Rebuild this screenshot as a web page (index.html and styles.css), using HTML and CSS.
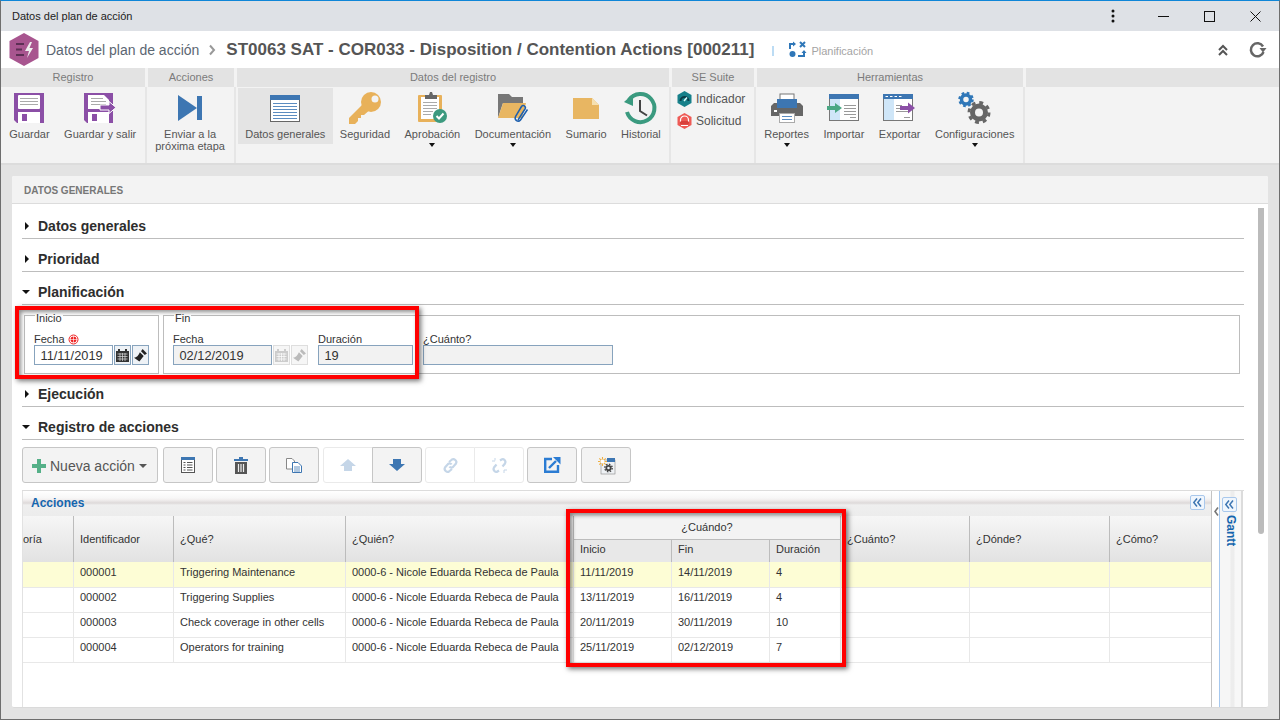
FILE: index.html
```html
<!doctype html>
<html lang="en">
  <head>
    <meta charset="UTF-8" />
    <title>Datos del plan de acción</title>
    <link rel="stylesheet" href="styles.css">
  </head>

  <body>
    <div class="window">
      <!-- Title bar -->
      <div class="titlebar">
        <span class="titlebar-text">Datos del plan de acción</span>
        <div class="win-controls">
          <svg class="win-kebab" width="4" height="14" viewBox="0 0 4 14"><circle cx="2" cy="2" r="1.5" fill="#111"/><circle cx="2" cy="7" r="1.5" fill="#111"/><circle cx="2" cy="12" r="1.5" fill="#111"/></svg>
          <svg class="win-min" width="11" height="11" viewBox="0 0 11 11"><path d="M0 5.5H11" stroke="#111"/></svg>
          <svg class="win-max" width="11" height="11" viewBox="0 0 11 11"><rect x=".5" y=".5" width="10" height="10" fill="none" stroke="#111"/></svg>
          <svg class="win-close" width="11" height="11" viewBox="0 0 11 11"><path d="M.5 .5L10.5 10.5M10.5 .5L.5 10.5" stroke="#111"/></svg>
        </div>
      </div>

      <!-- Header -->
      <div class="header">
        <svg class="logo" width="30" height="33" viewBox="0 0 30 33">
          <path d="M15 0L29.5 8V25L15 33L.5 25V8Z" fill="#a8558f"/>
          <path d="M7 11H15M7 16.5H13M7 22H15" stroke="#5c2f54" stroke-width="2"/>
          <path d="M21 9L16 18H20L18 25L24 15H20.500L23 9Z" fill="#eee"/>
        </svg>
        <span class="crumb">Datos del plan de acción</span>
        <svg class="crumb-sep" width="6" height="10" viewBox="0 0 6 10"><path d="M1 .5L5 5L1 9.500" fill="none" stroke="#999" stroke-width="2"/></svg>
        <span class="record-title">ST0063 SAT - COR033 - Disposition / Contention Actions [000211]</span>
        <span class="head-bar"></span>
        <svg class="plan-icon" width="17" height="17" viewBox="0 0 17 17" fill="none" stroke="#2f77b8" stroke-width="2">
          <path d="M1 8V3H6"/><path d="M4 0.500L7 3L4 5.500" fill="#2f77b8" stroke="none"/>
          <path d="M11 1L16 6M16 1L11 6"/>
          <circle cx="3.500" cy="13" r="3" fill="#2f77b8" stroke="none"/>
          <path d="M9 15H15V10"/><path d="M12.500 12L15 9L17.500 12" fill="#2f77b8" stroke="none"/>
        </svg>
        <span class="plan-text">Planificación</span>
        <div class="head-right">
          <svg width="10" height="12" viewBox="0 0 10 12" fill="none" stroke="#555" stroke-width="2"><path d="M1 6L5 2L9 6M1 11L5 7L9 11"/></svg>
          <svg class="refresh" width="18" height="16" viewBox="0 0 18 16" fill="none"><path d="M14 4.500A6.500 6.500 0 1 0 14.500 10" stroke="#666" stroke-width="2.500"/><path d="M10.500 6H17.500L14 10.500Z" fill="#666"/></svg>
        </div>
      </div>

      <!-- Ribbon -->
      <div class="ribbon">
        <div class="rb-group rb-registro">
          <div class="rb-title">Registro</div>
          <div class="rb-body">
            <div class="rb-item">
              <svg width="30" height="36" viewBox="14 90 30 36">
                <path d="M14 93H44V123H17L14 120Z" fill="#8b4fa6"/>
                <rect x="18" y="95" width="22" height="14" rx="1" fill="#fff"/>
                <path d="M20 98.500H38M20 101.500H38M20 104.500H38" stroke="#aaa"/>
                <rect x="18" y="112" width="22" height="11" fill="#fff"/>
                <rect x="22" y="114" width="5" height="7" fill="#8b4fa6"/>
              </svg>
              <div class="rb-label">Guardar</div>
            </div>
            <div class="rb-item">
              <svg width="33" height="36" viewBox="84 90 33 36">
                <path d="M84 93H113V123H87L84 120Z" fill="#8b4fa6"/>
                <path d="M88 95H104L109 100V109H88Z" fill="#fff"/>
                <path d="M91 98.500H103M91 101.500H106M91 104.500H106" stroke="#aaa"/>
                <rect x="88" y="112" width="21" height="11" fill="#fff"/>
                <rect x="92" y="114" width="5" height="7" fill="#8b4fa6"/>
                <path d="M100 105H109V101.500L116 107.500L109 113.500V110H100Z" fill="#8b4fa6" stroke="#fff"/>
              </svg>
              <div class="rb-label">Guardar y salir</div>
            </div>
          </div>
        </div>

        <div class="rb-group rb-acciones">
          <div class="rb-title">Acciones</div>
          <div class="rb-body">
            <div class="rb-item">
              <svg width="24" height="36" viewBox="179 90 24 36">
                <path d="M179 95L198 108L179 121Z" fill="#3d76b2"/>
                <rect x="198" y="96" width="5" height="24" fill="#3d76b2"/>
              </svg>
              <div class="rb-label">Enviar a la<br>próxima etapa</div>
            </div>
          </div>
        </div>

        <div class="rb-group rb-datos">
          <div class="rb-title">Datos del registro</div>
          <div class="rb-body">
            <div class="rb-item rb-active">
              <svg width="30" height="36" viewBox="270 90 30 36">
                <rect x="270.500" y="95.500" width="29" height="26" fill="#fff" stroke="#666"/>
                <rect x="270" y="95" width="30" height="5" fill="#3d76b2"/>
                <path d="M273 103.500H297M273 106.500H297M273 109.500H297M273 112.500H297M273 115.500H297M273 118.500H297" stroke="#5b8cc0"/>
              </svg>
              <div class="rb-label">Datos generales</div>
            </div>
            <div class="rb-item">
              <svg width="32" height="36" viewBox="349 90 32 36">
                <circle cx="371" cy="102" r="10" fill="#e8b15a"/>
                <path d="M365 102L349 118V124H355L358 121V118H361V115H364L372 108Z" fill="#e8b15a"/>
                <circle cx="375" cy="99" r="3.500" fill="#f3f3f3"/>
              </svg>
              <div class="rb-label">Seguridad</div>
            </div>
            <div class="rb-item">
              <svg width="30" height="36" viewBox="418 90 30 36">
                <rect x="419" y="95" width="24" height="27" rx="1" fill="#e8b15a"/>
                <rect x="422" y="97" width="18" height="22" fill="#fff"/>
                <path d="M424 102.500H438M424 105.500H438M424 108.500H438M424 111.500H434M424 114.500H432" stroke="#aaa"/>
                <path d="M431 92H433L434 95H438V99H426V95H430Z" fill="#666"/>
                <circle cx="441" cy="116" r="7" fill="#3c9a7f"/>
                <path d="M437.500 116L440 118.500L444.500 113.500" fill="none" stroke="#fff" stroke-width="2"/>
              </svg>
              <div class="rb-label">Aprobación</div>
              <div class="rb-caret"></div>
            </div>
            <div class="rb-item">
              <svg width="32" height="36" viewBox="497 90 32 36">
                <path d="M498 94H509L512 97H523V103H503L498 118Z" fill="#777"/>
                <path d="M503 103H526L522 118H498Z" fill="#e8b662"/>
                <path d="M518 120L525 109C526.500 106.500 523 104 521.500 106.500L515.500 116.500C514 120 518 123 520.500 120L527.500 109.500" fill="none" stroke="#1d5fae" stroke-width="1.500"/>
              </svg>
              <div class="rb-label">Documentación</div>
              <div class="rb-caret"></div>
            </div>
            <div class="rb-item">
              <svg width="26" height="36" viewBox="574 90 26 36">
                <path d="M574 98H593L600 105V119H574Z" fill="#e8b662"/>
                <path d="M593 98L600 105H593Z" fill="#f6e0b0"/>
              </svg>
              <div class="rb-label">Sumario</div>
            </div>
            <div class="rb-item">
              <svg width="33" height="36" viewBox="625 90 33 36">
                <path d="M630 100A14 14 0 1 1 628 112" fill="none" stroke="#3a9a7f" stroke-width="4"/>
                <path d="M625 102L634 94V106Z" fill="#3a9a7f"/>
                <path d="M641 100V111L648 115.500" fill="none" stroke="#444" stroke-width="2"/>
              </svg>
              <div class="rb-label">Historial</div>
            </div>
          </div>
        </div>

        <div class="rb-group rb-suite">
          <div class="rb-title">SE Suite</div>
          <div class="rb-body rb-links">
            <div class="rb-link">
              <svg width="15" height="16" viewBox="0 0 15 16">
                <path d="M7.500 0L14.500 4V12L7.500 16L.5 12V4Z" fill="#17808a"/>
                <path d="M3.500 10A4 4 0 0 1 11.500 10" fill="none" stroke="#0d3d48" stroke-width="2"/>
                <path d="M7 10L10 6.500" stroke="#dff" stroke-width="1.500"/>
              </svg>
              <span>Indicador</span>
            </div>
            <div class="rb-link">
              <svg width="15" height="16" viewBox="0 0 15 16">
                <path d="M7.500 0L14.500 4V12L7.500 16L.5 12V4Z" fill="#ee5a55"/>
                <path d="M3.500 9V7A4 4 0 0 1 11.500 7V9" fill="none" stroke="#fff" stroke-width="1.200"/>
                <rect x="3" y="8" width="9" height="3.500" rx="1.500" fill="#d8403c"/>
                <path d="M4 12.500H11" stroke="#fff"/>
              </svg>
              <span>Solicitud</span>
            </div>
          </div>
        </div>

        <div class="rb-group rb-tools">
          <div class="rb-title">Herramientas</div>
          <div class="rb-body">
            <div class="rb-item">
              <svg width="32" height="36" viewBox="772 90 32 36">
                <rect x="781" y="94" width="14" height="6" fill="#fff" stroke="#777"/>
                <path d="M772 106L775 103H801L804 106V116H772Z" fill="#666"/>
                <rect x="778" y="99" width="20" height="9" fill="#3d76b2"/>
                <rect x="780.500" y="113.500" width="15" height="9" fill="#fff" stroke="#aaa"/>
                <path d="M783 116.500H793M783 119.500H793" stroke="#5b8cc0"/>
                <rect x="775" y="110" width="3" height="2" fill="#fff"/>
              </svg>
              <div class="rb-label">Reportes</div>
              <div class="rb-caret"></div>
            </div>
            <div class="rb-item">
              <svg width="33" height="36" viewBox="829 90 33 36">
                <rect x="831.500" y="94.500" width="29" height="26" fill="#fff" stroke="#777"/>
                <rect x="831" y="94" width="30" height="5" fill="#3d76b2"/>
                <rect x="832" y="99" width="10" height="21" fill="#cfe6f8"/>
                <path d="M846 105.500H858M846 108.500H858M846 111.500H858M846 114.500H858M852 117.500H858" stroke="#999"/>
                <path d="M829 106H837V103L844 108L837 113V110H829Z" fill="#4aa884"/>
              </svg>
              <div class="rb-label">Importar</div>
            </div>
            <div class="rb-item">
              <svg width="33" height="36" viewBox="884 90 33 36">
                <rect x="884.500" y="94.500" width="29" height="26" fill="#fff" stroke="#777"/>
                <rect x="884" y="94" width="30" height="5" fill="#3d76b2"/>
                <path d="M886.500 96.500H889M891 96.500H893.500M895.500 96.500H898M900 96.500H902.500" stroke="#fff"/>
                <rect x="885" y="99" width="10" height="21" fill="#cfe6f8"/>
                <path d="M897 105.500H903M897 108.500H903M897 111.500H911M905 117.500H911" stroke="#999"/>
                <path d="M901 106H909V102.500L916 108L909 113.500V110H901Z" fill="#8b4fa6"/>
              </svg>
              <div class="rb-label">Exportar</div>
            </div>
            <div class="rb-item">
              <svg width="33" height="36" viewBox="958.500 90 33 36" fill="none">
                <circle cx="966.500" cy="99.500" r="4.500" stroke="#2f77b8" stroke-width="3.500"/>
                <circle cx="966.500" cy="99.500" r="6.500" stroke="#2f77b8" stroke-width="2.500" stroke-dasharray="2.600 2.500"/>
                <circle cx="979.500" cy="112.500" r="6.500" stroke="#666" stroke-width="5"/>
                <circle cx="979.500" cy="112.500" r="10" stroke="#666" stroke-width="3" stroke-dasharray="3.900 3.950"/>
              </svg>
              <div class="rb-label">Configuraciones</div>
              <div class="rb-caret"></div>
            </div>
          </div>
        </div>

        <div class="rb-group rb-rest">
          <div class="rb-title">&nbsp;</div>
          <div class="rb-body"></div>
        </div>
      </div>

      <!-- Main panel -->
      <div class="content">
        <div class="panel">
          <div class="panel-head">Datos generales</div>
          <div class="panel-body">
            <div class="scrollbar"></div>

            <div class="section-head"><span class="arrow-right"></span>Datos generales</div>
            <div class="section-head"><span class="arrow-right"></span>Prioridad</div>
            <div class="section-head"><span class="arrow-down"></span>Planificación</div>

            <div class="plan-fields">
              <fieldset class="fset fset-start">
                <legend>Inicio</legend>
                <div class="field">
                  <label>Fecha
                    <svg width="11" height="11" viewBox="0 0 11 11"><circle cx="5.500" cy="5.500" r="4.500" fill="none" stroke="#e22"/><circle cx="5.500" cy="5.500" r="3" fill="#e22"/><path d="M5.500 2V9M2 5.500H9" stroke="#fff" stroke-width=".6"/></svg>
                  </label>
                  <div class="date-row">
                    <div class="input input-start">11/11/2019</div>
                    <div class="pick-btn">
                      <svg width="13" height="13" viewBox="0 0 13 13"><path d="M0 2H13V13H0Z" fill="#333"/><path d="M3 0V3M10 0V3" stroke="#333" stroke-width="2"/><path d="M1.500 5H11.500M1.500 7.500H11.500M1.500 10H11.500M4 4V12M6.500 4V12M9 4V12" stroke="#ddd" stroke-width=".7"/></svg>
                    </div>
                    <div class="pick-btn">
                      <svg width="14" height="14" viewBox="0 0 13 13"><path d="M8 1L12 5L10 6.500L6.500 3Z" fill="#222"/><path d="M5.500 4L9 7.500L5 12.500L0 9C2.500 9 4 7 5.500 4Z" fill="#222"/></svg>
                    </div>
                  </div>
                </div>
              </fieldset>

              <fieldset class="fset fset-end">
                <legend>Fin</legend>
                <div class="field">
                  <label>Fecha</label>
                  <div class="date-row">
                    <div class="input input-end input-off">02/12/2019</div>
                    <div class="pick-btn pick-off">
                      <svg width="13" height="13" viewBox="0 0 13 13"><path d="M0 2H13V13H0Z" fill="#ccc"/><path d="M3 0V3M10 0V3" stroke="#ccc" stroke-width="2"/><path d="M1.500 5H11.500M1.500 7.500H11.500M1.500 10H11.500M4 4V12M6.500 4V12M9 4V12" stroke="#fff" stroke-width=".7"/></svg>
                    </div>
                    <div class="pick-btn pick-off">
                      <svg width="14" height="14" viewBox="0 0 13 13"><path d="M8 1L12 5L10 6.500L6.500 3Z" fill="#bbb"/><path d="M5.500 4L9 7.500L5 12.500L0 9C2.500 9 4 7 5.500 4Z" fill="#bbb"/></svg>
                    </div>
                  </div>
                </div>
                <div class="field">
                  <label>Duración</label>
                  <div class="input input-dur input-off">19</div>
                </div>
                <div class="field">
                  <label>¿Cuánto?</label>
                  <div class="input input-cost input-off"></div>
                </div>
              </fieldset>
            </div>

            <div class="section-head"><span class="arrow-right"></span>Ejecución</div>
            <div class="section-head"><span class="arrow-down"></span>Registro de acciones</div>

            <div class="toolbar">
              <button class="tb-btn tb-new">
                <svg width="14" height="14" viewBox="0 0 14 14"><path d="M5 0H9V5H14V9H9V14H5V9H0V5H5Z" fill="#55b088"/></svg>
                Nueva acción
                <span class="tb-caret"></span>
              </button>
              <button class="tb-btn">
                <svg width="14" height="16" viewBox="0 0 14 16"><rect x=".5" y=".5" width="13" height="15" fill="#fff" stroke="#555"/><rect width="14" height="3" fill="#3d76b2"/><path d="M2.500 5.500H4.500M6 5.500H11.500M2.500 8H4.500M6 8H11.500M2.500 10.500H4.500M6 10.500H11.500M2.500 13H4.500M6 13H11.500" stroke="#555"/></svg>
              </button>
              <button class="tb-btn">
                <svg width="14" height="17" viewBox="0 0 14 17"><path d="M0 2H14V4H0ZM5 0H9V2H5Z" fill="#3d76b2"/><path d="M1 5H13V17H1Z" fill="#555"/><path d="M4.500 7V15M7 7V15M9.500 7V15" stroke="#eee" stroke-width="1.200"/></svg>
              </button>
              <button class="tb-btn">
                <svg width="16" height="15" viewBox="0 0 16 15"><path d="M.5 .5H6L8.500 3V11H.5Z" fill="#fff" stroke="#888"/><path d="M6.500 4.500H12L15.500 8V14.500H6.500Z" fill="#fff" stroke="#3d76b2"/><path d="M8 9H14M8 11H14M8 13H14" stroke="#3d76b2" stroke-width=".8"/></svg>
              </button>
              <div class="tb-join tb-join-move">
                <button class="tb-btn tb-off">
                  <svg width="16" height="12" viewBox="0 0 16 12"><path d="M8 0L16 7H12V12H4V7H0Z" fill="#c5d6e8"/></svg>
                </button>
                <button class="tb-btn">
                  <svg width="16" height="12" viewBox="0 0 16 12"><path d="M4 0H12V5H16L8 12L0 5H4Z" fill="#3d76b2"/></svg>
                </button>
              </div>
              <div class="tb-join">
                <button class="tb-btn tb-off">
                  <svg width="17" height="17" viewBox="0 0 17 17" fill="none" stroke="#c5d6e8" stroke-width="2.200"><path d="M7 5L10 2.500C12 1 15.500 4 14 6.500L11 10C9.500 11 8 10.500 7.500 9.500"/><path d="M10 12L7 14.500C5 16 1.500 13 3 10.500L6 7C7.500 6 9 6.500 9.500 7.500"/></svg>
                </button>
                <button class="tb-btn tb-off">
                  <svg width="17" height="17" viewBox="0 0 17 17" fill="none" stroke="#c5d6e8" stroke-width="2.200"><path d="M9 3.500L10.500 2.500C12.500 1 15.500 4 14 6.500L11.500 9.500"/><path d="M8 13.500L6.500 14.500C4.500 16 1.500 13 3 10.500L5.500 7.500"/><path d="M1 4H4M4 1V3.500M13 16V13M16 13H13" stroke-width="1"/></svg>
                </button>
              </div>
              <button class="tb-btn">
                <svg width="17" height="16" viewBox="0 0 17 16" fill="none"><path d="M8 2H1.200V14.800H14V8" stroke="#2b7cd3" stroke-width="2.400"/><path d="M5 11L12 4" stroke="#2b7cd3" stroke-width="2.400"/><path d="M9 0H16.500V7.500Z" fill="#2b7cd3"/></svg>
              </button>
              <button class="tb-btn tb-last">
                <svg width="17" height="17" viewBox="0 0 17 17"><rect x="3" y="3" width="14" height="14" fill="#eef1f4" stroke="#888" stroke-width=".6"/><rect x="9" y="1" width="8" height="4" fill="#3d76b2"/><path d="M4.500 0V9M0 4.500H9M1.300 1.300L7.700 7.700M7.700 1.300L1.300 7.700" stroke="#f0b040" stroke-width="1.100"/><circle cx="4.500" cy="4.500" r="2" fill="#fff"/><circle cx="10.500" cy="11" r="2.200" fill="none" stroke="#444" stroke-width="1.800"/><circle cx="10.500" cy="11" r="3.700" fill="none" stroke="#444" stroke-width="1.400" stroke-dasharray="1.500 1.400"/></svg>
              </button>
            </div>

            <div class="grid-wrap">
              <div class="grid-main">
                <div class="grid-strip">
                  <span class="grid-title">Acciones</span>
                  <div class="collapse-btn">
                    <svg width="9" height="9" viewBox="0 0 9 9" fill="none" stroke="#3d76b2" stroke-width="1.500"><path d="M4 .5L.8 4.500L4 8.500M8 .5L4.800 4.500L8 8.500"/></svg>
                  </div>
                </div>
                <table class="grid">
                  <colgroup>
                    <col class="c-cat"><col class="c-id"><col class="c-what"><col class="c-who">
                    <col class="c-date"><col class="c-date"><col class="c-dur">
                    <col class="c-cost"><col class="c-where"><col class="c-how">
                  </colgroup>
                  <thead>
                    <tr class="head-top">
                      <th rowspan="2" class="th-cat">oría</th>
                      <th rowspan="2">Identificador</th>
                      <th rowspan="2">¿Qué?</th>
                      <th rowspan="2">¿Quién?</th>
                      <th colspan="3" class="th-when">¿Cuándo?</th>
                      <th rowspan="2">¿Cuánto?</th>
                      <th rowspan="2">¿Dónde?</th>
                      <th rowspan="2">¿Cómo?</th>
                    </tr>
                    <tr class="head-sub">
                      <th>Inicio</th>
                      <th>Fin</th>
                      <th>Duración</th>
                    </tr>
                  </thead>
                  <tbody>
                    <tr class="row-selected">
                      <td></td><td>000001</td><td>Triggering Maintenance</td><td>0000-6 - Nicole Eduarda Rebeca de Paula</td>
                      <td>11/11/2019</td><td>14/11/2019</td><td>4</td><td></td><td></td><td></td>
                    </tr>
                    <tr>
                      <td></td><td>000002</td><td>Triggering Supplies</td><td>0000-6 - Nicole Eduarda Rebeca de Paula</td>
                      <td>13/11/2019</td><td>16/11/2019</td><td>4</td><td></td><td></td><td></td>
                    </tr>
                    <tr>
                      <td></td><td>000003</td><td>Check coverage in other cells</td><td>0000-6 - Nicole Eduarda Rebeca de Paula</td>
                      <td>20/11/2019</td><td>30/11/2019</td><td>10</td><td></td><td></td><td></td>
                    </tr>
                    <tr>
                      <td></td><td>000004</td><td>Operators for training</td><td>0000-6 - Nicole Eduarda Rebeca de Paula</td>
                      <td>25/11/2019</td><td>02/12/2019</td><td>7</td><td></td><td></td><td></td>
                    </tr>
                  </tbody>
                </table>
              </div>
              <div class="grid-handle">
                <svg width="5" height="9" viewBox="0 0 5 9" fill="none" stroke="#777" stroke-width="1.600"><path d="M4 .5L1 4.500L4 8.500"/></svg>
              </div>
              <div class="gantt">
                <div class="collapse-btn">
                  <svg width="9" height="9" viewBox="0 0 9 9" fill="none" stroke="#3d76b2" stroke-width="1.500"><path d="M4 .5L.8 4.500L4 8.500M8 .5L4.800 4.500L8 8.500"/></svg>
                </div>
                <span class="gantt-title">Gantt</span>
              </div>
            </div>
          </div>
        </div>
      </div>

      <!-- Red annotation boxes from the screenshot -->
      <div class="mark mark-dates"></div>
      <div class="mark mark-when"></div>
    </div>
  </body>
</html>
```

FILE: styles.css
```css
/* General styles */
* {
  box-sizing: border-box;
}

body {
  margin: 0;
  padding: 0;
  overflow: hidden;
  font-family: 'Liberation Sans', Arial, sans-serif;
  color: #444;
}

svg {
  display: block;
  overflow: visible;
}

.window {
  position: relative;
  display: flex;
  flex-direction: column;
  width: 1280px;
  height: 720px;
  background: #e3e3e3;
  border: 1px solid #6e6e6e;
  border-top-color: #0f86d8;
  overflow: hidden;
}

/* Title bar */
.titlebar {
  display: flex;
  align-items: center;
  justify-content: space-between;
  height: 30px;
  padding-left: 11px;
  background: #dee1e6;
  color: #222;
  font-size: 11px;
}

.win-controls {
  display: flex;
  align-items: center;
}

.win-kebab {
  margin-right: 43px;
}

.win-min {
  margin-right: 35px;
}

.win-max {
  margin-right: 35px;
}

.win-close {
  margin-right: 18px;
}

/* Header */
.header {
  display: flex;
  align-items: center;
  height: 37px;
  padding-left: 8px;
  background: #fff;
}

.crumb {
  margin-left: 7px;
  font-size: 14px;
  color: #5b6672;
}

.crumb-sep {
  margin: 0 11px 0 10px;
}

.record-title {
  font-size: 17px;
  font-weight: bold;
  color: #555;
  white-space: nowrap;
}

.head-bar {
  width: 2px;
  height: 10px;
  margin: 2px 15px 0 18px;
  background: #bcdcf4;
}

.plan-text {
  margin: 2px 0 0 5px;
  font-size: 11px;
  color: #a4a4a4;
}

.head-right {
  display: flex;
  align-items: center;
  gap: 21px;
  margin-left: auto;
  margin-right: 12px;
}

/* Ribbon */
.ribbon {
  display: flex;
  height: 97px;
  background: #f3f3f3;
  border-bottom: 2px solid #dcdcdc;
}

.rb-group {
  display: flex;
  flex-direction: column;
  flex: none;
}

.rb-registro { width: 147px; }
.rb-acciones { width: 89px; }
.rb-datos { width: 435px; }
.rb-suite { width: 85px; }
.rb-tools { width: 269px; }
.rb-rest { flex: 1; }

.rb-title {
  height: 19px;
  margin-right: 3px;
  background: #e3e3e3;
  color: #7b7b7b;
  font-size: 11px;
  line-height: 19px;
  text-align: center;
}

.rb-rest .rb-title {
  margin-right: 0;
}

.rb-body {
  display: flex;
  align-items: flex-start;
  flex: 1;
  margin-right: 1px;
  padding-top: 1px;
  border-right: 2px solid #e6e6e6;
}

.rb-rest .rb-body {
  border-right: 0;
}

.rb-datos .rb-body,
.rb-registro .rb-body {
  padding-left: 1px;
}

.rb-item {
  display: flex;
  flex-direction: column;
  align-items: center;
  flex: none;
  padding: 2px 7.25px 4px;
}

.rb-active {
  background: #e4e4e4;
}

.rb-label {
  margin-top: 2px;
  color: #555;
  font-size: 11px;
  line-height: 12px;
  text-align: center;
  white-space: nowrap;
}

.rb-caret {
  width: 0;
  height: 0;
  margin-top: 3px;
  margin-bottom: -7px;
  border: 3.5px solid transparent;
  border-top: 4px solid #111;
  border-bottom: 0;
}

.rb-links {
  flex-direction: column;
  padding-left: 5px;
}

.rb-link {
  display: flex;
  align-items: center;
  gap: 4px;
  height: 22px;
  color: #555;
  font-size: 12px;
}

/* Main panel */
.content {
  display: flex;
  flex: 1;
  min-height: 0;
  padding: 11px;
}

.panel {
  display: flex;
  flex-direction: column;
  flex: 1;
  min-width: 0;
  background: #fff;
  border-bottom: 1px solid #dadada;
  border-radius: 2px;
  overflow: hidden;
}

.panel-head {
  flex: none;
  height: 28px;
  padding-left: 12px;
  background: #f3f3f3;
  border-bottom: 1px solid #dcdcdc;
  color: #777;
  font-size: 10px;
  font-weight: bold;
  line-height: 30px;
  text-transform: uppercase;
}

.panel-body {
  position: relative;
  display: flex;
  flex-direction: column;
  flex: 1;
  min-height: 0;
  padding: 2px 24px 0 10px;
}

.scrollbar {
  position: absolute;
  top: 4px;
  left: 1246px;
  width: 6px;
  height: 326px;
  background: #bbb;
  border-radius: 0 0 3px 3px;
}

.section-head {
  display: flex;
  align-items: flex-end;
  flex: none;
  height: 33px;
  padding-bottom: 4px;
  border-bottom: 1px solid #bdbdbd;
  color: #2e2e2e;
  font-size: 14px;
  font-weight: bold;
  line-height: 16px;
}

.arrow-right,
.arrow-down {
  flex: none;
  width: 0;
  height: 0;
  border-style: solid;
  border-color: transparent;
}

.arrow-right {
  margin: 0 9px 4px 3px;
  border-width: 4px 0 4px 4px;
  border-left-color: #111;
}

.arrow-down {
  margin: 0 8px 6px 0;
  border-width: 4px 4px 0 4px;
  border-top-color: #111;
}

/* Planificacion form */
.plan-fields {
  display: flex;
  flex: none;
  gap: 4px;
  height: 69px;
  padding: 10px 4px 0 2px;
}

.fset {
  position: relative;
  display: flex;
  align-items: flex-start;
  gap: 10px;
  min-width: 0;
  height: 59px;
  margin: 0;
  padding: 17px 9px 0;
  border: 1px solid #bdbdbd;
}

.fset legend {
  position: absolute;
  top: -4px;
  padding: 0 1px;
  background: #fff;
  color: #333;
  font-size: 11px;
  line-height: 12px;
}

.fset-start {
  flex: none;
  width: 135px;
}

.fset-start legend {
  left: 10px;
}

.fset-end {
  flex: 1;
}

.fset-end legend {
  left: 10px;
}

.field label {
  display: flex;
  align-items: center;
  gap: 3px;
  height: 12px;
  color: #333;
  font-size: 11px;
  line-height: 12px;
}

.date-row {
  display: flex;
  gap: 1px;
}

.input {
  height: 20px;
  padding-left: 5.500px;
  background: #fff;
  border: 1px solid #87a3bd;
  color: #333;
  font-size: 12.800px;
  line-height: 19px;
}

.input-off {
  background: #f2f2f2;
}

.input-start { width: 79px; }
.input-end { width: 99px; }
.input-dur { width: 95px; }
.input-cost { width: 190px; }

.pick-btn {
  display: flex;
  align-items: center;
  justify-content: center;
  width: 17px;
  height: 20px;
  background: #eef2f6;
  border: 1px solid #87a3bd;
}

.pick-off {
  background: #f6f6f6;
  border-color: #dedede;
}

/* Toolbar */
.toolbar {
  display: flex;
  flex: none;
  gap: 3px;
  height: 36px;
  margin-top: 7px;
}

.tb-btn {
  display: flex;
  align-items: center;
  justify-content: center;
  width: 50px;
  height: 36px;
  padding: 0;
  background: #f3f3f3;
  border: 1px solid #c6c6c6;
  border-radius: 3px;
  color: #555;
  font-family: inherit;
  font-size: 14px;
}

.tb-new {
  gap: 4px;
  justify-content: flex-start;
  width: 136px;
  margin-right: 2px;
  padding-top: 1px;
  padding-left: 9px;
}

.tb-caret {
  width: 0;
  height: 0;
  border: 4px solid transparent;
  border-top: 4px solid #555;
  border-bottom: 0;
}

.tb-off {
  background: #fff;
  border-color: #eaeaea;
}

.tb-join {
  display: flex;
}

.tb-join-move {
  margin-left: 1px;
}

.tb-last {
  margin-left: 1px;
}

.tb-join .tb-btn:first-child {
  border-radius: 3px 0 0 3px;
}

.tb-join .tb-btn:last-child {
  margin-left: -1px;
  border-radius: 0 3px 3px 0;
}

/* Grid */
.grid-wrap {
  display: flex;
  flex: 1;
  min-height: 0;
  margin-top: 7px;
  border-top: 1px solid #dcdcdc;
}

.grid-main {
  flex: none;
  width: 1190px;
  border-left: 1px solid #e2e2e2;
  border-right: 1px solid #c4c4c4;
}

.grid-strip {
  display: flex;
  align-items: center;
  justify-content: space-between;
  height: 25px;
  padding: 0 6px 2px 8px;
  background: linear-gradient(#fff 0, #f7f7f7 7px, #f1eeee 9px, #ddd9d9 12px, #efefef 14px, #ececec 100%);
}

.grid-title {
  color: #1565ae;
  font-size: 12px;
  font-weight: bold;
}

.collapse-btn {
  display: flex;
  align-items: center;
  justify-content: center;
  width: 15px;
  height: 15px;
  background: #f0f6fd;
  border: 1px solid #a9c8ec;
  border-radius: 2px;
}

.grid {
  width: 1188px;
  border-collapse: separate;
  border-spacing: 0;
  table-layout: fixed;
  color: #333;
  font-size: 11px;
}

.c-cat { width: 51px; }
.c-id { width: 100px; }
.c-what { width: 172px; }
.c-who { width: 228px; }
.c-date { width: 98px; }
.c-dur { width: 71px; }
.c-cost { width: 129px; }
.c-where { width: 140px; }
.c-how { width: 101px; }

.grid th {
  padding: 0 0 0 6px;
  border-right: 1px solid #bcbcbc;
  background: linear-gradient(#f6f6f6, #e2e2e2);
  font-weight: normal;
  text-align: left;
  white-space: nowrap;
  overflow: hidden;
}

.grid th:last-child {
  border-right: 0;
}

.grid .th-cat {
  padding-left: 0;
}

.head-top {
  height: 24px;
}

.head-sub {
  height: 22px;
}

.grid .th-when {
  padding: 0 0 2px;
  border-bottom: 1px solid #bcbcbc;
  background: #f3f3f3;
  text-align: center;
}

.grid .head-sub th {
  padding-bottom: 4px;
  background: #e8e8e8;
}

.grid .head-sub th:last-child {
  border-right: 1px solid #bcbcbc;
}

.grid td {
  height: 25px;
  padding: 0 0 6px 6px;
  border-right: 1px solid #e8e8e8;
  border-bottom: 1px solid #e8e8e8;
  white-space: nowrap;
  overflow: hidden;
}

.grid td:last-child {
  border-right: 0;
}

.grid .row-selected td {
  height: 26px;
  padding-bottom: 5px;
  background: #fdfdd5;
}

.grid-handle {
  flex: none;
  width: 8px;
  padding: 16px 0 0 2px;
  border-right: 1px solid #a6c8ee;
}

.gantt {
  display: flex;
  flex-direction: column;
  align-items: flex-start;
  flex: none;
  width: 23px;
  padding: 6px 0 0 2px;
  background: linear-gradient(90deg, #f6f6f6 0, #f6f6f6 10px, #ededed 11px, #ededed 14px, #f8f8f8 15px);
  border-right: 2px solid #dcdcdc;
}

.gantt-title {
  margin: 3px 0 0 2px;
  color: #1565ae;
  font-size: 12px;
  font-weight: bold;
  line-height: 13px;
  writing-mode: vertical-rl;
}

/* Annotation boxes */
.mark {
  position: absolute;
  border: 4px solid #f00;
  box-shadow: 2px 2px 5px rgba(0, 0, 0, 0.55), inset 2px 2px 4px rgba(0, 0, 0, 0.45);
  pointer-events: none;
}

.mark-dates {
  left: 14px;
  top: 305px;
  width: 404px;
  height: 73px;
}

.mark-when {
  left: 565px;
  top: 508px;
  width: 280px;
  height: 158px;
}
```
